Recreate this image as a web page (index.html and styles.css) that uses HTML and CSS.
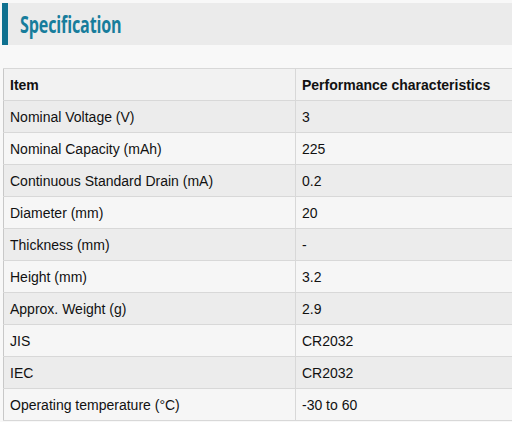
FILE: index.html
```html
<!DOCTYPE html>
<html>
<head>
<meta charset="utf-8">
<link rel="stylesheet" href="styles.css">
</head>
<body>
<div class="head"><h2 class="title">Specification</h2></div>
<table class="spec">
<thead>
<tr><th>Item</th><th>Performance characteristics</th></tr>
</thead>
<tbody>
<tr><td>Nominal Voltage (V)</td><td>3</td></tr>
<tr><td>Nominal Capacity (mAh)</td><td>225</td></tr>
<tr><td>Continuous Standard Drain (mA)</td><td>0.2</td></tr>
<tr><td>Diameter (mm)</td><td>20</td></tr>
<tr><td>Thickness (mm)</td><td>-</td></tr>
<tr><td>Height (mm)</td><td>3.2</td></tr>
<tr><td>Approx. Weight (g)</td><td>2.9</td></tr>
<tr><td>JIS</td><td>CR2032</td></tr>
<tr><td>IEC</td><td>CR2032</td></tr>
<tr><td>Operating temperature (°C)</td><td>-30 to 60</td></tr>
</tbody>
</table>
</body>
</html>
```
FILE: styles.css
```css
html, body {
  margin: 0;
  padding: 0;
  background: #f8f8f8;
  overflow: hidden;
}
body {
  padding-top: 3px;
  padding-left: 2px;
}
.head {
  height: 42px;
  background: #ebebeb;
  border-left: 6px solid #0f7190;
  display: flex;
  align-items: center;
}
.title {
  margin: 0 0 0 12px;
  font-family: "Open Sans", sans-serif;
  font-weight: bold;
  font-size: 23px;
  color: #177d9c;
  letter-spacing: -0.2px;
  transform: scaleX(0.7);
  transform-origin: left center;
  white-space: nowrap;
}
.spec {
  margin-top: 23px;
  margin-left: 1px;
  width: 520px;
  border-collapse: collapse;
  font-family: "Liberation Sans", Arial, sans-serif;
  font-size: 14px;
  color: #111;
  table-layout: fixed;
}
.spec th, .spec td {
  height: 31px;
  padding: 0 0 0 6px;
  text-align: left;
  border: 1px solid #d8d8d8;
  vertical-align: middle;
}
.spec th:first-child, .spec td:first-child {
  width: 285px;
  border-left: 1px solid #c8c8c8;
}
.spec th {
  font-weight: bold;
  background: #f2f2f2;
}
.spec tbody tr:nth-child(odd) td { background: #ececec; }
.spec tbody tr:nth-child(even) td { background: #f6f6f6; }
```
